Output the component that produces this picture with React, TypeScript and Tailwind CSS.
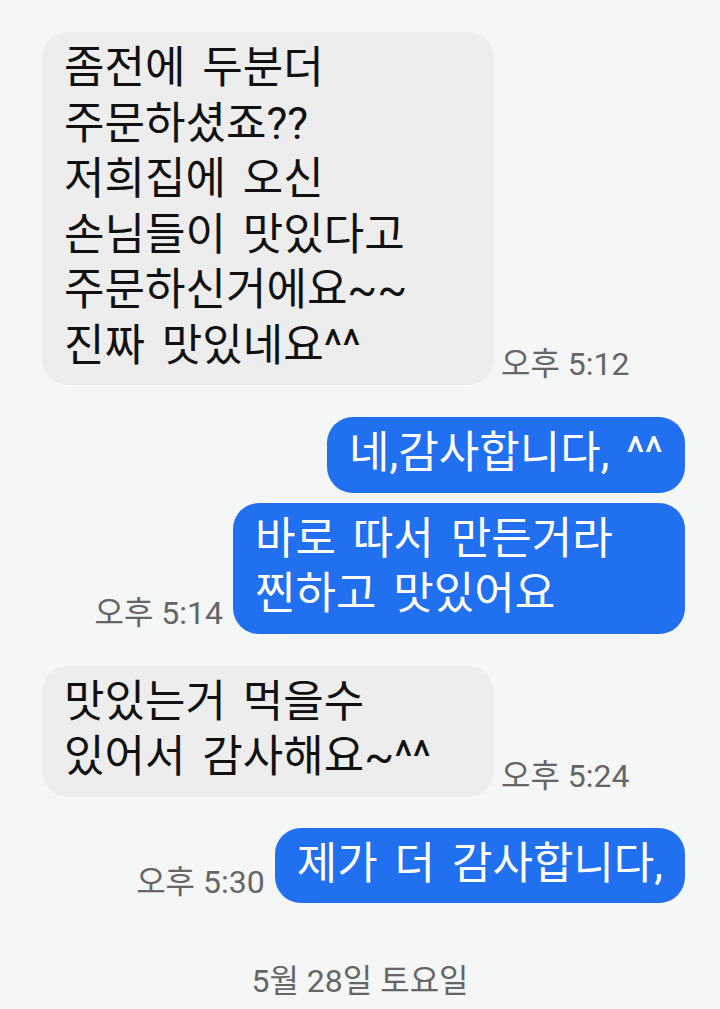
const textFont = "font-['Roboto','Noto_Sans_CJK_KR',sans-serif]";

type Msg = {
  from: 'them' | 'me';
  lines: string[];
  time: string;
  wide?: boolean;
  gap: string;
};

const messages: Msg[] = [
  {
    from: 'them',
    lines: ['좀전에 두분더', '주문하셨죠??', '저희집에 오신', '손님들이 맛있다고', '주문하신거에요~~', '진짜 맛있네요^^'],
    time: '오후 5:12',
    wide: true,
    gap: 'mt-0',
  },
  { from: 'me', lines: ['네,감사합니다, ^^'], time: '', gap: 'mt-[32px]' },
  { from: 'me', lines: ['바로 따서 만든거라', '찐하고 맛있어요'], time: '오후 5:14', wide: true, gap: 'mt-[10px]' },
  { from: 'them', lines: ['맛있는거 먹을수', '있어서 감사해요~^^'], time: '오후 5:24', wide: true, gap: 'mt-[32px]' },
  { from: 'me', lines: ['제가 더 감사합니다,'], time: '오후 5:30', gap: 'mt-[31px]' },
];

function Time({ children, side }: { children: string; side: 'left' | 'right' }) {
  return (
    <span
      className={`${textFont} text-[32px] leading-[36px] text-[#666666] whitespace-nowrap mb-[3px] ${
        side === 'right' ? 'ml-[7px]' : 'mr-[10px]'
      }`}
    >
      {children}
    </span>
  );
}

function Bubble({ msg }: { msg: Msg }) {
  const mine = msg.from === 'me';
  return (
    <div
      className={`${textFont} text-[44px] leading-[55.5px] [word-spacing:6px] rounded-[26px] px-[22px] pt-[9px] pb-[11px] whitespace-nowrap ${
        msg.wide ? 'w-[452px]' : ''
      } ${mine ? 'bg-[#2070ef] text-white' : 'bg-[#ededed] text-[#111111]'}`}
    >
      {msg.lines.map((line) => (
        <div key={line}>{line}</div>
      ))}
    </div>
  );
}

export default function App() {
  return (
    <div className="h-[1009px] overflow-hidden bg-[#f5f6f6] pt-[32px] flex flex-col">
      {messages.map((msg, i) =>
        msg.from === 'them' ? (
          <div key={i} className={`flex items-end pl-[42px] ${msg.gap}`}>
            <Bubble msg={msg} />
            {msg.time && <Time side="right">{msg.time}</Time>}
          </div>
        ) : (
          <div key={i} className={`flex items-end justify-end pr-[35px] ${msg.gap}`}>
            {msg.time && <Time side="left">{msg.time}</Time>}
            <Bubble msg={msg} />
          </div>
        )
      )}
      <div className={`${textFont} mt-[60px] text-center text-[32px] leading-[36px] text-[#666666]`}>
        5월 28일 토요일
      </div>
    </div>
  );
}
